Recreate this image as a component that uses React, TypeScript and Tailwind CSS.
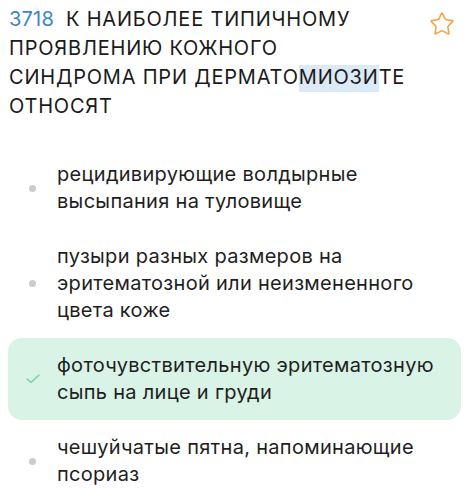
import { Star } from "lucide-react";

type Option = { text: string; correct?: boolean };

const options: Option[] = [
  { text: "рецидивирующие волдырные высыпания на туловище" },
  { text: "пузыри разных размеров на эритематозной или неизмененного цвета коже" },
  { text: "фоточувствительную эритематозную сыпь на лице и груди", correct: true },
  { text: "чешуйчатые пятна, напоминающие псориаз" },
];

function Check() {
  return (
    <svg width="14" height="10" viewBox="0 0 14 10" fill="none">
      <polyline
        points="1,5 5,8.5 13,1"
        stroke="#6fd3a5"
        strokeWidth="1.4"
        strokeLinecap="round"
        strokeLinejoin="round"
      />
    </svg>
  );
}

export default function App() {
  return (
    <div
      className="w-[466px] h-[504px] bg-white overflow-hidden text-[#1b1b1b]"
      style={{ fontFamily: "Inter, 'Noto Sans', sans-serif" }}
    >
      <div className="flex items-start pl-[9px] pr-[10px] pt-[5px]">
        <p className="flex-1 text-[20px] leading-[29px] tracking-[0.8px]">
          <span className="text-[#3b86c6] mr-[12px] tracking-[0.2px]">3718</span>
          К НАИБОЛЕЕ ТИПИЧНОМУ
          <br />
          ПРОЯВЛЕНИЮ КОЖНОГО
          <br />
          СИНДРОМА ПРИ ДЕРМАТО
          <span className="bg-[#dce9f7] pb-[3px]">МИОЗИ</span>
          ТЕ
          <br />
          ОТНОСЯТ
        </p>
        <Star size={26} strokeWidth={1.5} className="text-[#f2a649] mt-[6px] mr-[1px] shrink-0" />
      </div>

      <div className="mt-[26px] flex flex-col">
        {options.map((o) => (
          <div
            key={o.text}
            className={
              "flex items-center ml-2 mr-[5px] rounded-[14px] py-[14px] " +
              (o.correct ? "bg-[#d9f3e6]" : "")
            }
          >
            <div className="w-[49px] shrink-0 flex justify-center">
              {o.correct ? (
                <Check />
              ) : (
                <div className="w-[7px] h-[7px] rounded-full bg-[#cccccc]" />
              )}
            </div>
            <p className="flex-1 pr-[14px] text-[20px] leading-[27px] tracking-[0.3px] text-[#1e1e1e]">
              {o.text}
            </p>
          </div>
        ))}
      </div>
    </div>
  );
}
